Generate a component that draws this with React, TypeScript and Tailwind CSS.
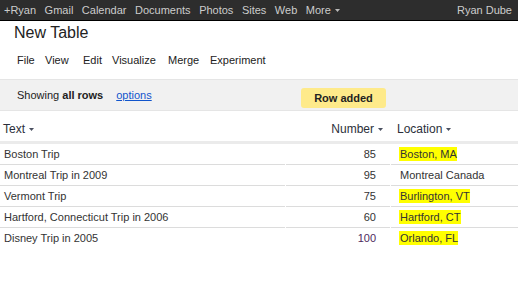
import React from "react";

const Caret = ({ className = "" }: { className?: string }) => (
  <svg width="5" height="3" viewBox="0 0 5 3" className={className}>
    <path d="M0 0 H5 L2.5 3 Z" fill="currentColor" />
  </svg>
);

const rows = [
  { text: "Boston Trip", num: "85", loc: "Boston, MA", hl: true, purple: false },
  { text: "Montreal Trip in 2009", num: "95", loc: "Montreal Canada", hl: false, purple: false },
  { text: "Vermont Trip", num: "75", loc: "Burlington, VT", hl: true, purple: false },
  { text: "Hartford, Connecticut Trip in 2006", num: "60", loc: "Hartford, CT", hl: true, purple: false },
  { text: "Disney Trip in 2005", num: "100", loc: "Orlando, FL", hl: true, purple: true },
];

export default function App() {
  const font = { fontFamily: '"Liberation Sans", Arial, sans-serif' };
  return (
    <div className="w-[518px] h-[302px] bg-white overflow-hidden text-[#333]" style={font}>
      {/* top bar */}
      <div className="h-[21px] bg-[#2d2d2d] border-b border-black flex items-center px-[4px] text-[11px] text-[#cccccc]">
        <div className="flex items-center gap-[8.5px]">
          <span>+Ryan</span>
          <span>Gmail</span>
          <span>Calendar</span>
          <span>Documents</span>
          <span>Photos</span>
          <span>Sites</span>
          <span>Web</span>
          <span className="flex items-center gap-[4px]">
            More <Caret className="text-[#bbbbbb] mt-[1px]" />
          </span>
        </div>
        <span className="ml-auto pr-[2px]">Ryan Dube</span>
      </div>

      {/* title */}
      <div className="h-[24px] leading-[24px] pl-[14px] text-[16px] text-[#222]">New Table</div>

      {/* menu */}
      <div className="h-[34px] pt-[3px] pl-[17px] flex text-[11px] leading-[24px] text-[#222]">
        <span className="w-[28px]">File</span>
        <span className="w-[38px]">View</span>
        <span className="w-[29px]">Edit</span>
        <span className="w-[56px]">Visualize</span>
        <span className="w-[42px]">Merge</span>
        <span>Experiment</span>
      </div>

      {/* status band */}
      <div className="relative h-[32px] bg-[#f1f1f1] border-t border-b border-[#e5e5e5] flex items-start pl-[17px] text-[11px]">
        <div className="h-[30px] leading-[30px] text-[#222]">
          Showing <span className="font-bold">all rows</span>
          <a className="ml-[13px] text-[#1155cc] underline">options</a>
        </div>
        <div className="absolute left-[301px] top-[8px] h-[20px] w-[85px] rounded-[3px] bg-[#feea8a] text-[11px] font-bold leading-[20px] text-[#222] text-center">
          Row added
        </div>
      </div>

      {/* table header */}
      <div className="grid grid-cols-[285px_104px_127px] gap-x-px h-[33px] border-b-[3px] border-[#ebebeb] text-[12px] leading-[16px] text-[#2b2f3a]">
        <div className="pt-[10px] pl-[3px] flex items-start">
          <span className="flex items-center gap-[4px]">Text <Caret className="text-[#4a5060]" /></span>
        </div>
        <div className="pt-[10px] pr-[7px] flex justify-end items-start">
          <span className="flex items-center gap-[4px]">Number <Caret className="text-[#4a5060]" /></span>
        </div>
        <div className="pt-[10px] pl-[6px] flex items-start">
          <span className="flex items-center gap-[4px]">Location <Caret className="text-[#4a5060]" /></span>
        </div>
      </div>

      {/* table body */}
      <div className="grid grid-cols-[285px_104px_127px] gap-x-px text-[11px]">
        {rows.map((r, i) => {
          const last = i === rows.length - 1;
          const b = last ? "h-[20px]" : "h-[21px] border-b border-[#dcdcdc]";
          return (
            <React.Fragment key={i}>
              <div className={`${b} pl-[4px] flex items-center`}>{r.text}</div>
              <div className={`${b} pr-[14px] flex items-center justify-end ${r.purple ? "text-[#4e2a5e]" : ""}`}>{r.num}</div>
              <div className={`${b} pl-[8px] flex items-center`}>
                <span className={`inline-block leading-[14px] pl-[1px] ${r.hl ? "bg-[#ffff00]" : ""}`}>{r.loc}</span>
              </div>
            </React.Fragment>
          );
        })}
      </div>
    </div>
  );
}
